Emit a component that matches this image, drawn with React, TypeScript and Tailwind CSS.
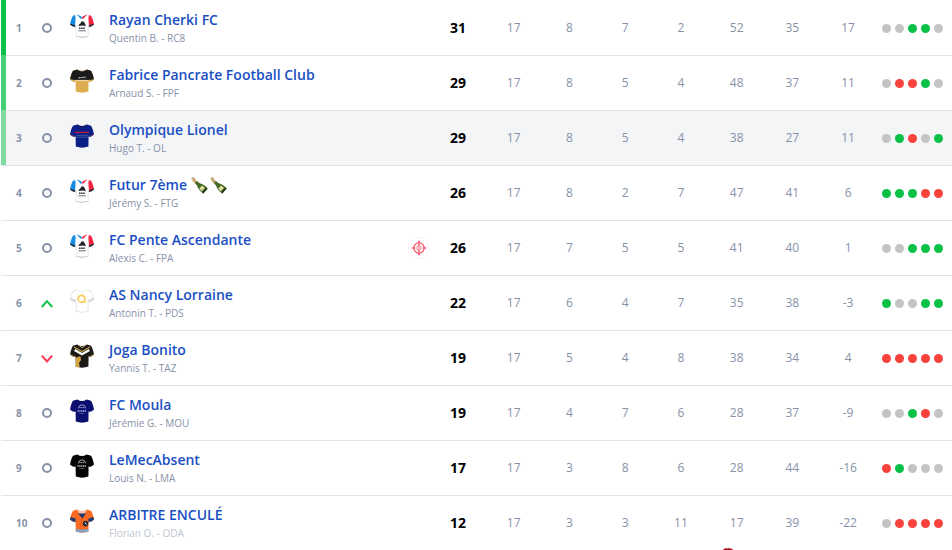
import React from "react";

type Kit = "fdj" | "gold" | "france" | "white" | "joga" | "navy" | "black" | "orange";
type Trend = "same" | "up" | "down";

interface Team {
  name: string;
  manager: string;
  kit: Kit;
  trend: Trend;
  points: number;
  stats: number[];
  form: string;
  bottles?: boolean;
  target?: boolean;
  faded?: boolean;
}

const teams: Team[] = [
  { name: "Rayan Cherki FC", manager: "Quentin B. - RC8", kit: "fdj", trend: "same", points: 31, stats: [17, 8, 7, 2, 52, 35, 17], form: "DDWWD" },
  { name: "Fabrice Pancrate Football Club", manager: "Arnaud S. - FPF", kit: "gold", trend: "same", points: 29, stats: [17, 8, 5, 4, 48, 37, 11], form: "DLLWD" },
  { name: "Olympique Lionel", manager: "Hugo T. - OL", kit: "france", trend: "same", points: 29, stats: [17, 8, 5, 4, 38, 27, 11], form: "DWLDW" },
  { name: "Futur 7ème", manager: "Jérémy S. - FTG", kit: "fdj", trend: "same", points: 26, stats: [17, 8, 2, 7, 47, 41, 6], form: "WWWLL", bottles: true },
  { name: "FC Pente Ascendante", manager: "Alexis C. - FPA", kit: "fdj", trend: "same", points: 26, stats: [17, 7, 5, 5, 41, 40, 1], form: "DDWWW", target: true },
  { name: "AS Nancy Lorraine", manager: "Antonin T. - PDS", kit: "white", trend: "up", points: 22, stats: [17, 6, 4, 7, 35, 38, -3], form: "WDDWW" },
  { name: "Joga Bonito", manager: "Yannis T. - TAZ", kit: "joga", trend: "down", points: 19, stats: [17, 5, 4, 8, 38, 34, 4], form: "LLLLL" },
  { name: "FC Moula", manager: "Jérémie G. - MOU", kit: "navy", trend: "same", points: 19, stats: [17, 4, 7, 6, 28, 37, -9], form: "DDWLD" },
  { name: "LeMecAbsent", manager: "Louis N. - LMA", kit: "black", trend: "same", points: 17, stats: [17, 3, 8, 6, 28, 44, -16], form: "LWDDD" },
  { name: "ARBITRE ENCULÉ", manager: "Florian O. - ODA", kit: "orange", trend: "same", points: 12, stats: [17, 3, 3, 11, 17, 39, -22], form: "DLLLL", faded: true },
];

const qualifying = ["bg-[#0ac147]", "bg-[#47cf77]", "bg-[#7edca0]"];

const dotColor: Record<string, string> = {
  W: "bg-[#0ac147]",
  D: "bg-[#c4c4c4]",
  L: "bg-[#f9423c]",
};

const base: Record<Kit, string> = {
  fdj: "#ffffff",
  gold: "#dcae50",
  france: "#0b1f86",
  white: "#fefefe",
  joga: "#1b1a17",
  navy: "#0a0f70",
  black: "#050505",
  orange: "#fb6a22",
};

const shirtPath =
  "M7.4 0.4 L3.6 1.6 Q1.6 2.4 0 10.6 Q2 12.8 5 13 L5.6 12 L5.8 22.6 Q12 24.8 18.4 22.6 L18.6 12 L19.2 13 Q22 12.8 24 10.6 Q22.4 2.4 20.4 1.6 L16.6 0.4 Q12 3.4 7.4 0.4 Z";

function Shirt({ kit, id }: { kit: Kit; id: string }) {
  const clip = `url(#${id})`;
  return (
    <svg className="mx-auto block size-6" viewBox="0 0 24 24" aria-hidden="true">
      <defs>
        <clipPath id={id}>
          <path d={shirtPath} />
        </clipPath>
      </defs>
      <path d={shirtPath} fill={base[kit]} />
      <g clipPath={clip}>
        {kit === "fdj" && (
          <>
            <path d="M0 0 H5 L5.6 4 L5 13 L0 10 Z" fill="#168be4" />
            <path d="M24 0 H19 L18.4 4 L19 13 L24 10 Z" fill="#f4233f" />
            <path d="M0 9.4 L5.4 11.6 V14 H0 Z M24 9.4 L18.8 11.6 V14 H24 Z" fill="#242833" />
            <path d="M7.4 0 L11.6 4.4" stroke="#168be4" strokeWidth="1.8" />
            <path d="M16.6 0 L12.4 4.4" stroke="#f4233f" strokeWidth="1.8" />
            <path d="M8.4 12 Q9 9.6 10.6 9.2 Q11 7 13.4 7.4 Q15 8.6 15.8 12.2 L13 11.4 Z" fill="#20222a" />
            <path d="M9 14.2 H15" stroke="#30333b" strokeWidth="1.6" strokeDasharray="1.6 .5" />
            <path d="M8.4 16.8 H15.8" stroke="#5b5e66" strokeWidth=".9" />
            <path d="M5 22.6 Q12 24.6 19 22.6" stroke="#b5b5b5" strokeWidth="1.6" fill="none" />
            <path d="M5.9 12 V23 M18.3 12 V23" stroke="#d5d5d5" strokeWidth="1" />
          </>
        )}
        {kit === "gold" && (
          <>
            <path d="M0 0 H24 V10.5 Q12 11.5 0 10.5 Z" fill="#1b1b1d" />
            <path d="M0 10.6 L5 13 M24 10.6 L19 13" stroke="#c5a15a" strokeWidth="1" />
            <path d="M5.6 11.4 H18.6" stroke="#f0dcae" strokeWidth="1" />
            <path d="M8.5 8.8 L15.5 8.2" stroke="#c9c9c9" strokeWidth="1.2" strokeDasharray="1.4 .5" />
            <path d="M7.4 0.4 Q12 3.6 16.6 0.4" stroke="#a48c57" strokeWidth="1" fill="none" />
          </>
        )}
        {kit === "france" && (
          <>
            <path d="M5 8.3 H19" stroke="#c91b3a" strokeWidth="1.3" />
            <path d="M6 11.3 H18.4 M6 13.2 H18.4" stroke="#4a62ae" strokeWidth=".8" />
            <path d="M0 10.4 L5 13 M24 10.4 L19 13" stroke="#8c3656" strokeWidth="1" />
            <path d="M7.4 0.4 Q12 4.4 16.6 0.4" stroke="#15194e" strokeWidth="1.5" fill="none" />
          </>
        )}
        {kit === "white" && (
          <>
            <path d={shirtPath} fill="none" stroke="#e2e2e2" strokeWidth="1.6" />
            <path d="M0 8.6 L5.4 11 V14 H0 Z M24 8.6 L18.8 11 V14 H24 Z" fill="#d8d8d8" />
            <circle cx="11.5" cy="9.8" r="3.4" fill="none" stroke="#f8ca50" strokeWidth="1.6" />
            <path d="M13 13 H16.5" stroke="#f8ca50" strokeWidth="1" />
          </>
        )}
        {kit === "joga" && (
          <>
            <path d="M4 3 L12 7.6 L20 3" stroke="#c79d45" strokeWidth="1.2" fill="none" />
            <path d="M4.6 6 L12 10.2 L19.4 6" stroke="#fff" strokeWidth="2.2" fill="none" />
            <path d="M5.4 14 L10.4 12 L11 16 L9 19 L10 24 H5 Z" fill="#d6a641" />
            <path d="M7.4 0.4 L12 3.6 L16.6 0.4" stroke="#d9ba6d" strokeWidth="1" fill="none" />
            <path d="M0 10.4 L5 13 M24 10.4 L19 13" stroke="#bd9445" strokeWidth="1" />
          </>
        )}
        {(kit === "navy" || kit === "black") && (
          <g stroke={kit === "navy" ? "#a5addd" : "#b9b9b9"} fill="none">
            <path d="M8.4 9.4 Q8.8 5.8 12 5.8 Q15.2 5.8 15.6 9.4" strokeWidth=".9" />
            <path d="M9.5 8.6 H14.5" strokeWidth="1" strokeDasharray="1.2 .5" />
            <path d="M7.5 12 H16.5" strokeWidth="1.7" strokeDasharray="1.3 .5" />
            <path d="M9.5 14.4 H14.5" strokeWidth=".7" strokeDasharray=".8 .5" />
          </g>
        )}
        {kit === "orange" && (
          <>
            <path d="M6.4 0 L12 9 L17.6 0 Z" fill="#f6c6ab" />
            <path d="M8 4.4 H16 L12.4 9.6 Z" fill="#24356c" />
            <path d="M0 8 L5.6 9.6 V14 H0 Z M24 8 L18.4 9.6 V14 H24 Z" fill="#213b74" />
            <path d="M5 19.8 Q12 21.4 19 19.8 V25 H5 Z" fill="#88a2c4" />
            <circle cx="15.6" cy="14.6" r="2.8" fill="#222733" />
            <path d="M15 13.4 L16.5 15.6" stroke="#f5e5d3" strokeWidth="1" />
            <path d="M12 9.6 L10.5 18" stroke="#cf4e12" strokeWidth=".7" />
          </>
        )}
      </g>
    </svg>
  );
}

function TrendMark({ trend }: { trend: Trend }) {
  if (trend === "same") {
    return <span className="mx-auto block size-[10px] rounded-full border-2 border-[#8792a8]" />;
  }
  return (
    <svg className="mx-auto block size-3" viewBox="0 0 12 12" fill="none" strokeWidth="2" aria-hidden="true">
      {trend === "up" ? (
        <path d="M.8 10 L6 4.2 L11.2 10" stroke="#0ac147" />
      ) : (
        <path d="M.8 3.6 L6 9.4 L11.2 3.6" stroke="#fb3850" />
      )}
    </svg>
  );
}

function Bottle() {
  return (
    <svg className="size-[18px]" viewBox="0 0 18 18" aria-hidden="true">
      <path d="M1 2.6 L3.4 .8 L5.6 3 L3.4 5.6 Z" fill="#c9ad88" />
      <path d="M3.6 4 L8.6 8.8" stroke="#c7a268" strokeWidth="3" />
      <path d="M6 6.2 L8.8 8.8" stroke="#4d6b2c" strokeWidth="3" />
      <path d="M8.2 7 Q13 7.2 17.6 12.4 L13.2 17.4 Q7.6 14 7 8.6 Z" fill="#3f6a22" />
      <path d="M12 9.4 L15 11.9 L11.8 15.2 L9.2 12.6 Z" fill="#e3d9a4" />
      <path d="M16.2 11.4 L17.6 12.6 L13.4 17.4 L12 16.4 Z" fill="#24390f" />
    </svg>
  );
}

function Target() {
  return (
    <svg className="size-[22px]" viewBox="0 0 22 22" fill="none" stroke="#f9405a" role="img" aria-label="Target">
      <circle cx="11" cy="11" r="10.3" stroke="#fdeef0" strokeWidth=".8" />
      <circle cx="11" cy="11" r="5.2" strokeWidth="1.1" />
      <circle cx="11" cy="11" r="2.3" strokeWidth=".6" />
      <path d="M11 3.5 V8 M11 14 V18.5 M3.5 11 H7.5 M14.5 11 H18.5" strokeWidth="1.2" />
      <path d="M11 8 V14" strokeWidth=".8" />
    </svg>
  );
}

export default function App() {
  return (
    <main className="h-screen overflow-hidden bg-white pl-px font-['Open_Sans',sans-serif]">
      <table className="w-full table-fixed border-separate border-spacing-0">
        <colgroup>
          <col className="w-[5px]" />
          <col className="w-[26px]" />
          <col className="w-[30px]" />
          <col className="w-10" />
          <col className="w-[34.5%]" />
          <col span={8} />
          <col className="w-[76px]" />
        </colgroup>
        <tbody>
          {teams.map((team, i) => {
            const line = i === 0 ? "border-t border-transparent p-0" : "border-t border-[#dee3e8] p-0";
            const last = i === teams.length - 1;
            return (
              <tr key={team.name} className={i === 2 ? "h-[55px] bg-[#f3f5f7]" : "h-[55px]"}>
                <td className={i < 3 ? `border-t border-transparent p-0 ${qualifying[i]}` : line} />
                <td className={`${line} pl-[10px] text-[10px] font-bold text-[#8792a8]`}>{i + 1}</td>
                <td className={line}>
                  <TrendMark trend={team.trend} />
                </td>
                <td className={line}>
                  <div className="pb-1">
                    <Shirt kit={team.kit} id={`kit-${i}`} />
                  </div>
                </td>
                <th scope="row" className={`${line} pl-[7px] text-left font-normal`}>
                  <div className="flex items-center justify-between">
                    <div>
                      <a href="#team" className="flex h-5 items-center gap-px text-sm leading-5 font-semibold text-[#1a4fc4]">
                        <span className={team.bottles ? "pr-0.5" : ""}>{team.name}</span>
                        {team.bottles && (
                          <>
                            <Bottle />
                            <Bottle />
                          </>
                        )}
                      </a>
                      <div className={team.faded ? "text-[10px] leading-4 text-[#c0c6d0]" : "text-[10px] leading-4 text-[#8792a8]"}>
                        {team.manager}
                      </div>
                    </div>
                    {team.target && <Target />}
                  </div>
                </th>
                <td className={`${line} text-center text-sm font-bold text-black`}>{team.points}</td>
                {team.stats.map((value, k) => (
                  <td key={k} className={`${line} relative text-center text-xs text-[#8792a8]`}>
                    {value}
                    {last && k === 4 && (
                      <svg className="absolute bottom-0 left-3.5 h-0.5 w-2.5" viewBox="0 0 10 2" aria-hidden="true">
                        <path d="M0 2 L1.5 .4 H8.5 L10 2 Z" fill="#b3111f" />
                        <path d="M3 0 V1 M6 0 V1" stroke="#6d0b14" />
                      </svg>
                    )}
                  </td>
                ))}
                <td className={line}>
                  <div className="flex gap-1 pl-[6px]">
                    {team.form.split("").map((result, k) => (
                      <span key={k} className={`size-[9px] rounded-full ${dotColor[result]}`} />
                    ))}
                  </div>
                </td>
              </tr>
            );
          })}
        </tbody>
      </table>
    </main>
  );
}
